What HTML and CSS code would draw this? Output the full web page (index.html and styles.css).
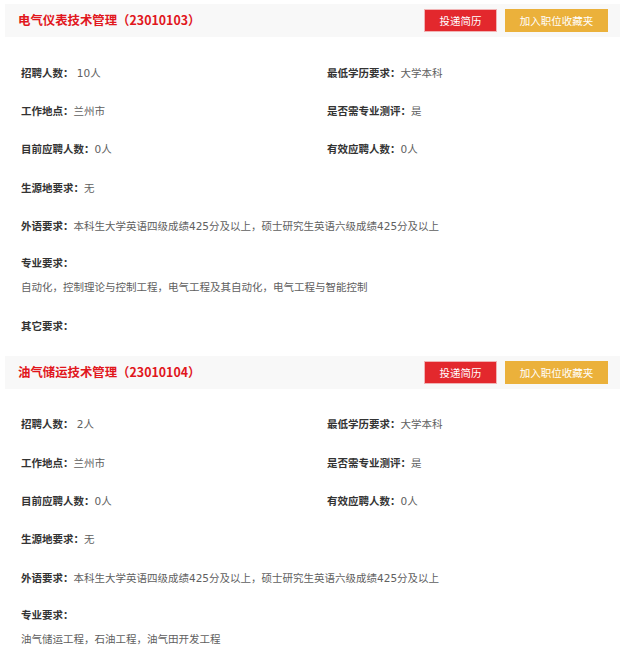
FILE: index.html
```html
<!DOCTYPE html>
<html lang="zh-CN">
<head>
<meta charset="utf-8">
<title>职位列表</title>
<link rel="stylesheet" href="styles.css">
</head>
<body>
<div class="page">
  <section class="job">
    <div class="job-head">
      <h2 class="job-title">电气仪表技术管理（23010103）</h2>
      <div class="actions">
        <button class="btn btn-apply">投递简历</button>
        <button class="btn btn-fav">加入职位收藏夹</button>
      </div>
    </div>
    <div class="job-body">
      <div class="grid">
        <div class="row"><span class="lbl">招聘人数：</span><span class="val">&nbsp;10人</span></div>
        <div class="row"><span class="lbl">最低学历要求：</span><span class="val">大学本科</span></div>
        <div class="row"><span class="lbl">工作地点：</span><span class="val">兰州市</span></div>
        <div class="row"><span class="lbl">是否需专业测评：</span><span class="val">是</span></div>
        <div class="row"><span class="lbl">目前应聘人数：</span><span class="val">0人</span></div>
        <div class="row"><span class="lbl">有效应聘人数：</span><span class="val">0人</span></div>
      </div>
      <div class="row"><span class="lbl">生源地要求：</span><span class="val">无</span></div>
      <div class="row"><span class="lbl">外语要求：</span><span class="val">本科生大学英语四级成绩425分及以上，硕士研究生英语六级成绩425分及以上</span></div>
      <div class="block">
        <div class="line lbl">专业要求：</div>
        <div class="line val">自动化，控制理论与控制工程，电气工程及其自动化，电气工程与智能控制</div>
      </div>
      <div class="row"><span class="lbl">其它要求：</span><span class="val"></span></div>
    </div>
  </section>

  <section class="job">
    <div class="job-head">
      <h2 class="job-title">油气储运技术管理（23010104）</h2>
      <div class="actions">
        <button class="btn btn-apply">投递简历</button>
        <button class="btn btn-fav">加入职位收藏夹</button>
      </div>
    </div>
    <div class="job-body">
      <div class="grid">
        <div class="row"><span class="lbl">招聘人数：</span><span class="val">&nbsp;2人</span></div>
        <div class="row"><span class="lbl">最低学历要求：</span><span class="val">大学本科</span></div>
        <div class="row"><span class="lbl">工作地点：</span><span class="val">兰州市</span></div>
        <div class="row"><span class="lbl">是否需专业测评：</span><span class="val">是</span></div>
        <div class="row"><span class="lbl">目前应聘人数：</span><span class="val">0人</span></div>
        <div class="row"><span class="lbl">有效应聘人数：</span><span class="val">0人</span></div>
      </div>
      <div class="row"><span class="lbl">生源地要求：</span><span class="val">无</span></div>
      <div class="row"><span class="lbl">外语要求：</span><span class="val">本科生大学英语四级成绩425分及以上，硕士研究生英语六级成绩425分及以上</span></div>
      <div class="block">
        <div class="line lbl">专业要求：</div>
        <div class="line val">油气储运工程，石油工程，油气田开发工程</div>
      </div>
      <div class="row"><span class="lbl">其它要求：</span><span class="val"></span></div>
    </div>
  </section>
</div>
</body>
</html>
```

FILE: styles.css
```css
html, body {
  margin: 0;
  padding: 0;
  background: #ffffff;
}

body {
  font-family: "DejaVu Sans", "Noto Sans CJK SC", "Microsoft YaHei", sans-serif;
  font-size: 10.5px;
  color: #333333;
}

.page {
  width: 615px;
  padding: 4px 20px 0 5px;
}

.job {
  padding-bottom: 11px;
}

.job-head {
  height: 33px;
  background: #f8f8f8;
  display: flex;
  align-items: center;
  justify-content: space-between;
  padding: 0 12px 0 13px;
}

.job-title {
  margin: 0;
  font-family: "Noto Sans CJK SC", "Microsoft YaHei", sans-serif;
  font-size: 12.4px;
  font-weight: bold;
  color: #e1161c;
  line-height: 33px;
}

.actions {
  display: flex;
  gap: 8px;
}

.btn {
  height: 23px;
  border: none;
  padding: 0;
  margin: 0;
  font-family: "Noto Sans CJK SC", "Microsoft YaHei", sans-serif;
  font-size: 10.5px;
  color: #ffffff;
  cursor: pointer;
  box-sizing: border-box;
}

.btn-apply {
  width: 73px;
  background: #e3282d;
  border: 1px solid #f1b3b4;
}

.btn-fav {
  width: 103px;
  background: #ebb13b;
}

.job-body {
  padding: 16px 0 0 16px;
}

.grid {
  display: grid;
  grid-template-columns: 306px 1fr;
}

.row {
  height: 38.3px;
  display: flex;
  align-items: center;
  white-space: nowrap;
}

.lbl {
  font-weight: bold;
  color: #333333;
}

.val {
  color: #606060;
}

.block {
  padding: 7px 0;
}

.line {
  line-height: 24px;
}
```
